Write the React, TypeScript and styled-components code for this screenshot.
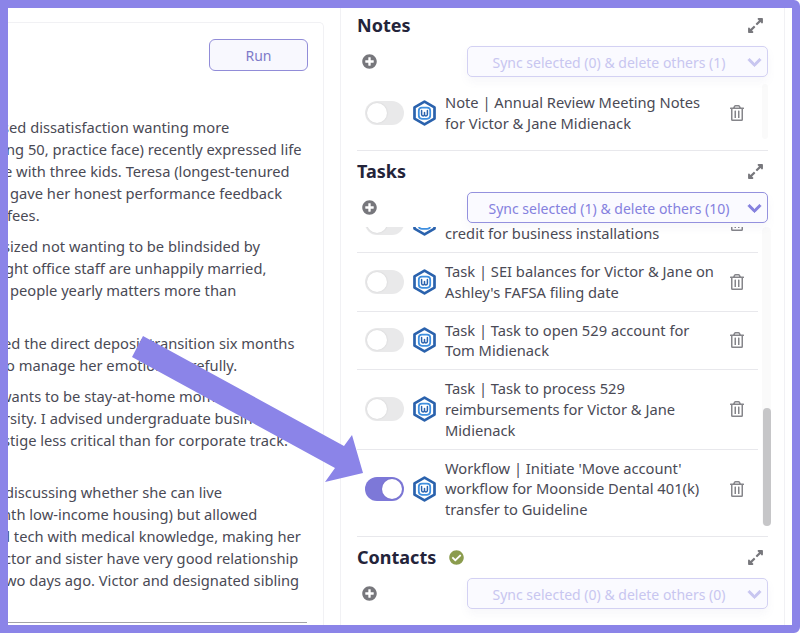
import styled, { createGlobalStyle } from "styled-components";
import { FaChevronDown, FaCheckCircle, FaExpandAlt, FaPlusCircle, FaRegTrashAlt } from "react-icons/fa";

const GlobalStyle = createGlobalStyle`
  html, body {
    margin: 0;
    padding: 0;
    background: #fff;
  }
  * {
    box-sizing: border-box;
  }
`;

const FRAME = "#8b84e8";
const ACCENT = "#8581de";

const Frame = styled.div`
  position: relative;
  width: 800px;
  height: 633px;
  display: flex;
  overflow: hidden;
  border: 8px solid ${FRAME};
  border-radius: 0 6px 6px 0;
  background: #fff;
  font-family: "Noto Sans", "Open Sans", sans-serif;
  color: #4a4a55;
`;

const TranscriptCard = styled.div`
  width: 316px;
  margin-top: 14px;
  padding: 16px 15px 0 0;
  flex-shrink: 0;
  overflow: hidden;
  border-top: 1px solid #f1f1f4;
  border-right: 1px solid #f1f1f4;
  border-top-right-radius: 5px;
`;

const RunBar = styled.div`
  display: flex;
  justify-content: flex-end;
  margin-bottom: 45px;
`;

const RunButton = styled.button`
  width: 99px;
  height: 32px;
  border: 1px solid #918cd8;
  border-radius: 6px;
  background: #f8f8fe;
  color: #7f7bc9;
  font: 400 14px "Noto Sans", sans-serif;
`;

const Paragraph = styled.div<{ $gap?: number }>`
  margin-bottom: ${(p) => p.$gap ?? 9}px;
`;

const Line = styled.div<{ $x: number }>`
  margin-left: ${(p) => p.$x}px;
  font-size: 14.7px;
  line-height: 22px;
  white-space: nowrap;
`;

const TranscriptEnd = styled.div`
  height: 1px;
  margin-top: 31px;
  margin-right: 1px;
  background: #a3a3a8;
`;

const SidePanel = styled.div`
  width: 445px;
  margin-left: 16px;
  padding: 5px 16px 0;
  flex-shrink: 0;
  border-left: 1px solid #f1f1f4;
  border-right: 1px solid #f1f1f4;
`;

const Section = styled.section<{ $divider?: boolean }>`
  padding-top: ${(p) => (p.$divider ? 8 : 0)}px;
  border-top: ${(p) => (p.$divider ? "1px solid #e8e8ec" : "none")};
`;

const SectionHeader = styled.div`
  display: flex;
  align-items: center;
  height: 24px;
  margin-bottom: 9px;
  padding-right: 4px;
`;

const Title = styled.h2`
  margin: 0;
  font-size: 18px;
  line-height: 24px;
  font-weight: 700;
  color: #24243a;
`;

const Done = styled(FaCheckCircle)`
  margin-left: 13px;
  width: 15px;
  height: 15px;
  color: #8b9c4e;
`;

const Expand = styled(FaExpandAlt)`
  margin-left: auto;
  width: 17px;
  height: 17px;
  color: #77777c;
`;

const Controls = styled.div`
  display: flex;
  align-items: center;
  justify-content: space-between;
  height: 31px;
  padding-left: 5px;
`;

const AddIcon = styled(FaPlusCircle)`
  width: 15px;
  height: 15px;
  color: #77777c;
`;

const SyncButton = styled.button<{ $active?: boolean }>`
  position: relative;
  z-index: 1;
  display: flex;
  align-items: center;
  width: 301px;
  height: 31px;
  padding: 2px 5px 0 3px;
  border: 1px solid ${(p) => (p.$active ? "#9491de" : "#d3d1f3")};
  border-radius: 5px;
  background: #fafaff;
  color: ${(p) => (p.$active ? ACCENT : "#c8c6f0")};
  font: 400 14px "Noto Sans", sans-serif;
  box-shadow: 0 5px 8px rgba(120, 120, 170, 0.06);
`;

const SyncLabel = styled.span`
  flex: 1;
  text-align: center;
  white-space: nowrap;
`;

const Chevron = styled(FaChevronDown)`
  width: 15px;
  height: 15px;
  stroke: currentColor;
  stroke-width: 30;
`;

const ListFrame = styled.div<{ $height: number; $top: number; $bottom: number }>`
  display: flex;
  height: ${(p) => p.$height}px;
  margin-top: ${(p) => p.$top}px;
  margin-bottom: ${(p) => p.$bottom}px;
`;

const RowScroller = styled.div`
  width: 401px;
  flex-shrink: 0;
  overflow: hidden;
`;

const RowStack = styled.div<{ $offset?: number }>`
  margin-top: ${(p) => p.$offset ?? 0}px;
`;

const Row = styled.div`
  display: flex;
  align-items: center;
  padding: 8px 12px 8px 8px;
  border-bottom: 1px solid #e8e8ec;

  &:last-child {
    border-bottom: none;
  }
`;

const Toggle = styled.span<{ $on?: boolean }>`
  display: flex;
  justify-content: ${(p) => (p.$on ? "flex-end" : "flex-start")};
  align-items: center;
  width: 39px;
  height: 24px;
  padding: 2px;
  flex-shrink: 0;
  border-radius: 12px;
  background: ${(p) => (p.$on ? "#7d78d8" : "#e9e9ea")};
`;

const Knob = styled.span`
  width: 20px;
  height: 20px;
  border-radius: 50%;
  background: #fff;
  box-shadow: 0 0 2px rgba(0, 0, 0, 0.12);
`;

const HexLogo = styled.svg`
  width: 23px;
  height: 26px;
  margin-left: 9px;
  flex-shrink: 0;
`;

const RowText = styled.div`
  width: 277px;
  margin-left: 9px;
  font-size: 14.7px;
  line-height: 20.8px;
`;

const Trash = styled(FaRegTrashAlt)`
  width: 14px;
  height: 16px;
  margin-left: 8px;
  flex-shrink: 0;
  color: #85858a;
`;

const Track = styled.div`
  width: 10px;
  margin-left: 4px;
  border-radius: 5px;
  background: #fafafa;
`;

const Thumb = styled.div<{ $top: number; $height: number }>`
  width: 8px;
  height: ${(p) => p.$height}px;
  margin-top: ${(p) => p.$top}px;
  margin-left: 1px;
  border-radius: 4px;
  background: #c6c6c8;
`;

const ArrowLayer = styled.svg`
  position: absolute;
  left: 117px;
  top: 322px;
  width: 240px;
  height: 155px;
  pointer-events: none;
`;

const transcript = [
  {
    gap: 9,
    lines: [
      { x: -6, text: "sed dissatisfaction wanting more" },
      { x: -2, text: "ng 50, practice face) recently expressed life" },
      { x: -4, text: "e with three kids. Teresa (longest-tenured" },
      { x: 2, text: "gave her honest performance feedback" },
      { x: -1, text: "fees." },
    ],
  },
  {
    gap: 31,
    lines: [
      { x: -5, text: "sized not wanting to be blindsided by" },
      { x: -3, text: "ght office staff are unhappily married," },
      { x: 2, text: "people yearly matters more than" },
    ],
  },
  {
    gap: 9,
    lines: [
      { x: -5, text: "ed the direct deposit transition six months" },
      { x: -2, text: "o manage her emotions carefully." },
    ],
  },
  {
    gap: 30,
    lines: [
      { x: -8, text: "wants to be stay-at-home moms" },
      { x: -4, text: "rsity. I advised undergraduate business" },
      { x: -5, text: "stige less critical than for corporate track." },
    ],
  },
  {
    gap: 0,
    lines: [
      { x: -3, text: "discussing whether she can live" },
      { x: -6, text: "nth low-income housing) but allowed" },
      { x: -7, text: "d tech with medical knowledge, making her" },
      { x: -4, text: "ctor and sister have very good relationship" },
      { x: -3, text: "wo days ago. Victor and designated sibling" },
    ],
  },
];

const taskRows = [
  { label: "Task | Review solar energy investment credit for business installations" },
  { label: "Task | SEI balances for Victor & Jane on Ashley's FAFSA filing date" },
  { label: "Task | Task to open 529 account for Tom Midienack" },
  { label: "Task | Task to process 529 reimbursements for Victor & Jane Midienack" },
  { label: "Workflow | Initiate 'Move account' workflow for Moonside Dental 401(k) transfer to Guideline", on: true },
];

function Logo() {
  return (
    <HexLogo viewBox="0 0 23 26" aria-hidden="true">
      <path d="M11.5 1.7 21.5 7.4v11.2l-10 5.7-10-5.7V7.4z" fill="none" stroke="#2a62ad" strokeWidth="2.7" strokeLinejoin="round" />
      <rect x="5.8" y="7.6" width="11.4" height="11.2" rx="3.2" fill="none" stroke="#3f8fdf" strokeWidth="1.8" />
      <path d="M8.6 10.5v3.8c0 1 .6 1.6 1.5 1.6s1.4-.6 1.4-1.6v-1.9v1.9c0 1 .5 1.6 1.4 1.6s1.5-.6 1.5-1.6v-3.8" fill="none" stroke="#2a62ad" strokeWidth="1.5" strokeLinecap="round" strokeLinejoin="round" />
    </HexLogo>
  );
}

function ItemRow({ label, on }: { label: string; on?: boolean }) {
  return (
    <Row>
      <Toggle $on={on}>
        <Knob />
      </Toggle>
      <Logo />
      <RowText>{label}</RowText>
      <Trash />
    </Row>
  );
}

function SectionTop({ title, done, sync, active }: { title: string; done?: boolean; sync: string; active?: boolean }) {
  return (
    <>
      <SectionHeader>
        <Title>{title}</Title>
        {done && <Done />}
        <Expand />
      </SectionHeader>
      <Controls>
        <AddIcon />
        <SyncButton type="button" $active={active}>
          <SyncLabel>{sync}</SyncLabel>
          <Chevron />
        </SyncButton>
      </Controls>
    </>
  );
}

export default function App() {
  return (
    <Frame>
      <GlobalStyle />
      <TranscriptCard>
        <RunBar>
          <RunButton type="button">Run</RunButton>
        </RunBar>
        {transcript.map((para, i) => (
          <Paragraph key={i} $gap={para.gap}>
            {para.lines.map((line) => (
              <Line key={line.text} $x={line.x}>
                {line.text}
              </Line>
            ))}
          </Paragraph>
        ))}
        <TranscriptEnd />
      </TranscriptCard>

      <SidePanel>
        <Section>
          <SectionTop title="Notes" sync="Sync selected (0) & delete others (1)" />
          <ListFrame $height={55} $top={7} $bottom={11}>
            <RowScroller>
              <RowStack>
                <ItemRow label="Note | Annual Review Meeting Notes for Victor & Jane Midienack" />
              </RowStack>
            </RowScroller>
            <Track />
          </ListFrame>
        </Section>

        <Section $divider>
          <SectionTop title="Tasks" sync="Sync selected (1) & delete others (10)" active />
          <ListFrame $height={299} $top={4} $bottom={10}>
            <RowScroller>
              <RowStack $offset={-32.5}>
                {taskRows.map((row) => (
                  <ItemRow key={row.label} label={row.label} on={row.on} />
                ))}
              </RowStack>
            </RowScroller>
            <Track>
              <Thumb $top={181} $height={118} />
            </Track>
          </ListFrame>
        </Section>

        <Section $divider>
          <SectionTop title="Contacts" done sync="Sync selected (0) & delete others (0)" />
        </Section>
      </SidePanel>

      <ArrowLayer viewBox="125 330 240 155" aria-hidden="true">
        <polygon points="143,336 344,446 352,435 363,473 325,482 335,468 132,357" fill={FRAME} />
      </ArrowLayer>
    </Frame>
  );
}
